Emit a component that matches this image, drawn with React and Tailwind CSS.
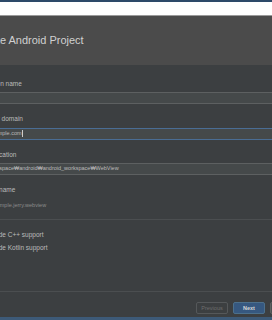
import React from 'react';

const font = { fontFamily: '"Liberation Sans", "Noto Sans CJK KR", sans-serif' };

const Field = ({ label, value, focused }) => (
  <div className="flex flex-col">
    <label className="text-[6.5px] leading-none text-[#bbbbbb] h-[8px] flex items-center whitespace-nowrap">{label}</label>
    <div
      className={`mt-[4px] h-[12px] flex items-center pl-[4px] bg-[#45494a] border ${
        focused ? 'border-[#4a6d94]' : 'border-[#5d6061]'
      }`}
    >
      <span className="text-[5.5px] leading-none text-[#bbbbbb] whitespace-nowrap">{value}</span>
      {focused && <span className="w-px h-[7px] bg-[#cccccc]" />}
    </div>
  </div>
);

const Check = ({ label }) => (
  <div className="flex items-center gap-[5px] h-[8px]">
    <span className="w-[8px] h-[8px] border border-[#6b6b6b] bg-[#43494a]" />
    <span className="text-[6.5px] leading-none text-[#bbbbbb] whitespace-nowrap">{label}</span>
  </div>
);

export default function App() {
  return (
    <div className="w-[272px] h-[320px] overflow-hidden bg-[#3c3f41] flex flex-col" style={font}>
      <div className="h-[2px] bg-[#2d4a69]" />
      <div className="h-[14px] bg-white border-b border-[#9a9a9a]" />
      <div className="h-[49px] bg-[#4b4b4b] flex items-center">
        <h1 className="-ml-[27px] text-[11px] text-[#d0d0d0] whitespace-nowrap">Create Android Project</h1>
      </div>
      <div className="w-[400px] -ml-[28px] flex flex-col">
        <div className="pt-[15px] flex flex-col gap-[11.5px]">
          <Field label="Application name" value="" />
          <Field label="Company domain" value="jerry.example.com" focused />
          <Field label="Project location" value="D:₩workspace₩android₩android_workspace₩WebView" />
          <div className="flex flex-col">
            <label className="text-[6.5px] leading-none text-[#bbbbbb] h-[8px] flex items-center whitespace-nowrap">
              Package name
            </label>
            <span className="mt-[8px] ml-[7px] text-[5.5px] leading-none text-[#8c8c8c] whitespace-nowrap">
              com.example.jerry.webview
            </span>
          </div>
        </div>
        <div className="mt-[11px] h-px bg-[#4b4e50]" />
        <div className="mt-[11px] flex flex-col gap-[5.5px]">
          <Check label="Include C++ support" />
          <Check label="Include Kotlin support" />
        </div>
        <div className="mt-[38.5px] h-px bg-[#4b4e50]" />
        <div className="mt-[10px] ml-[224px] flex gap-[5px]">
          <button className="w-[32px] h-[12px] border border-[#55585a] rounded-[2px] text-[5.5px] text-[#6e6e6e]">
            Previous
          </button>
          <button className="w-[32px] h-[12px] border border-[#4c708c] rounded-[2px] bg-[#365880] text-[5.5px] font-bold text-[#d6d6d6]">
            Next
          </button>
          <button className="w-[32px] h-[12px] border border-[#5e6060] rounded-[2px] bg-[#4c5052] text-[5.5px] text-[#bbbbbb]">
            Cancel
          </button>
        </div>
      </div>
      <div className="mt-auto h-[3px] bg-[#3d5a78]" />
    </div>
  );
}
